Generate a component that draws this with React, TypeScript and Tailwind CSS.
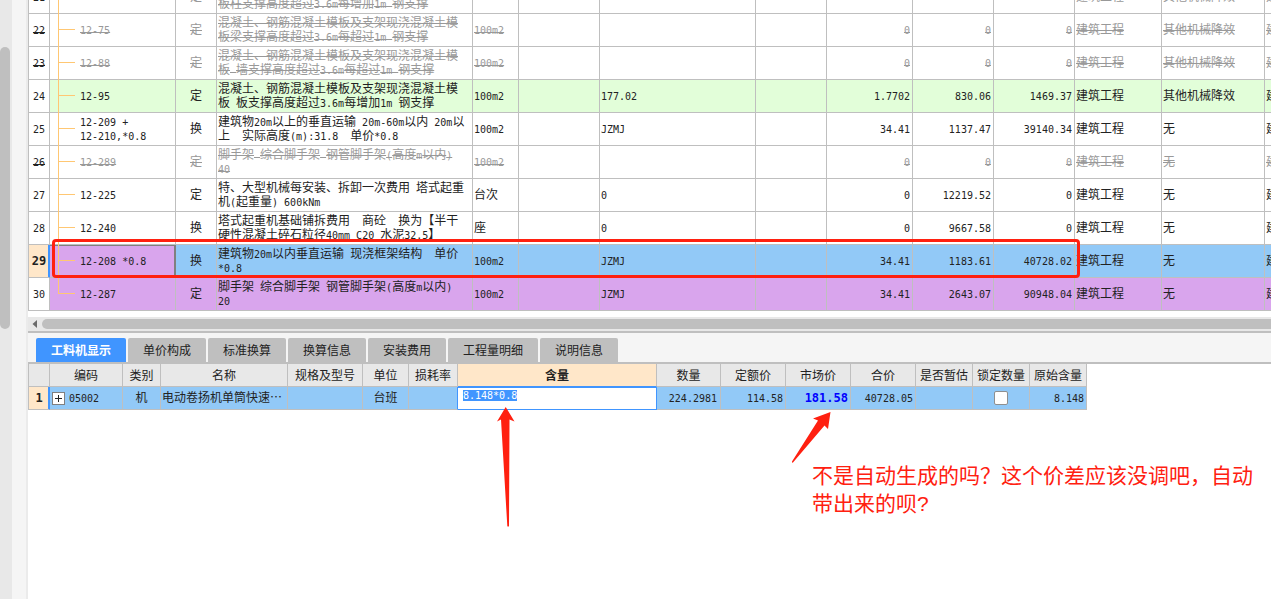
import React from 'react';
import clsx from 'clsx';

type RowState = 'normal' | 'deleted' | 'green' | 'selected' | 'purple';

interface QuotaRow {
  no: number;
  code: string;
  kind: string;
  name: string;
  unit: string;
  expr: string;
  qty: string;
  price: string;
  total: string;
  category: string;
  machine: string;
  state: RowState;
}

const rows: QuotaRow[] = [
  { no: 21, code: '', kind: '定', name: '\n板柱支撑高度超过3.6m每增加1m 钢支撑', unit: '', expr: '', qty: '', price: '', total: '', category: '建筑工程', machine: '其他机械降效', state: 'deleted' },
  { no: 22, code: '12-75', kind: '定', name: '混凝土、钢筋混凝土模板及支架现浇混凝土模\n板梁支撑高度超过3.6m每超过1m 钢支撑', unit: '100m2', expr: '', qty: '0', price: '0', total: '0', category: '建筑工程', machine: '其他机械降效', state: 'deleted' },
  { no: 23, code: '12-88', kind: '定', name: '混凝土、钢筋混凝土模板及支架现浇混凝土模\n板 墙支撑高度超过3.6m每超过1m 钢支撑', unit: '100m2', expr: '', qty: '0', price: '0', total: '0', category: '建筑工程', machine: '其他机械降效', state: 'deleted' },
  { no: 24, code: '12-95', kind: '定', name: '混凝土、钢筋混凝土模板及支架现浇混凝土模\n板 板支撑高度超过3.6m每增加1m 钢支撑', unit: '100m2', expr: '177.02', qty: '1.7702', price: '830.06', total: '1469.37', category: '建筑工程', machine: '其他机械降效', state: 'green' },
  { no: 25, code: '12-209 +\n12-210,*0.8', kind: '换', name: '建筑物20m以上的垂直运输 20m-60m以内 20m以\n上  实际高度(m):31.8  单价*0.8', unit: '100m2', expr: 'JZMJ', qty: '34.41', price: '1137.47', total: '39140.34', category: '建筑工程', machine: '无', state: 'normal' },
  { no: 26, code: '12-289', kind: '定', name: '脚手架 综合脚手架 钢管脚手架(高度m以内)\n40', unit: '100m2', expr: '', qty: '0', price: '0', total: '0', category: '建筑工程', machine: '无', state: 'deleted' },
  { no: 27, code: '12-225', kind: '定', name: '特、大型机械每安装、拆卸一次费用 塔式起重\n机(起重量) 600kNm', unit: '台次', expr: '0', qty: '0', price: '12219.52', total: '0', category: '建筑工程', machine: '无', state: 'normal' },
  { no: 28, code: '12-240', kind: '换', name: '塔式起重机基础铺拆费用  商砼  换为【半干\n硬性混凝土碎石粒径40mm C20 水泥32.5】', unit: '座', expr: '0', qty: '0', price: '9667.58', total: '0', category: '建筑工程', machine: '无', state: 'normal' },
  { no: 29, code: '12-208 *0.8', kind: '换', name: '建筑物20m以内垂直运输 现浇框架结构  单价\n*0.8', unit: '100m2', expr: 'JZMJ', qty: '34.41', price: '1183.61', total: '40728.02', category: '建筑工程', machine: '无', state: 'selected' },
  { no: 30, code: '12-287', kind: '定', name: '脚手架 综合脚手架 钢管脚手架(高度m以内)\n20', unit: '100m2', expr: 'JZMJ', qty: '34.41', price: '2643.07', total: '90948.04', category: '建筑工程', machine: '无', state: 'purple' },
];

const rowBg: Record<RowState, string> = {
  normal: 'bg-white text-[#222]',
  deleted: 'bg-white text-[#999] line-through',
  green: 'bg-[#e2fed9] text-[#222]',
  selected: 'bg-[#92c9f7] text-[#222]',
  purple: 'bg-[#d9a5ed] text-[#222]',
};

const tabs = ['工料机显示', '单价构成', '标准换算', '换算信息', '安装费用', '工程量明细', '说明信息'];

const mainCols = [21, 126, 41, 256, 46, 81, 156, 71, 86, 81, 81, 87, 103, 87];
const detailCols = [21, 73, 38, 127, 75, 46, 49, 199, 64, 65, 65, 65, 57, 57, 57];
const detailHeads = ['', '编码', '类别', '名称', '规格及型号', '单位', '损耗率', '含量', '数量', '定额价', '市场价', '合价', '是否暂估', '锁定数量', '原始含量'];

const cell = 'border-r border-b border-[#bfbfbf] p-0';

// Latin runs use a half-width monospace, so two of them take one Chinese character
const Mixed: React.FC<{ text: string; bold?: boolean }> = ({ text, bold }) => (
  <>
    {text.split(/([\x20-\x7e]+)/).map((part, i) =>
      /^[\x20-\x7e]+$/.test(part) ? (
        <span
          key={i}
          className={clsx("font-['DejaVu_Sans_Mono',monospace] leading-none", bold ? 'text-[12px] font-bold' : 'text-[10px]')}
        >
          {part}
        </span>
      ) : (
        part
      )
    )}
  </>
);

const ColGroup: React.FC<{ widths: number[] }> = ({ widths }) => (
  <colgroup>
    {widths.map((w, i) => (
      <col key={i} style={{ width: w }} />
    ))}
  </colgroup>
);

const QuotaTable: React.FC = () => (
  <table className="w-0 table-fixed border-separate border-spacing-0 border-l border-[#bfbfbf] shrink-0">
    <ColGroup widths={mainCols} />
    <tbody>
      {rows.map((row) => {
        const selected = row.state === 'selected';
        return (
          <tr key={row.no} className={clsx('h-[33px]', rowBg[row.state])}>
            <td
              className={clsx(
                cell,
                'text-center text-[#222]',
                row.state === 'deleted' && 'line-through',
                selected ? 'bg-[#ffe7c9] shadow-[inset_-1px_0_#4095ff] border-r-[#4095ff]' : 'bg-white'
              )}
            >
              <Mixed text={String(row.no)} bold={selected} />
            </td>
            <td className={clsx(cell, selected && 'bg-[#d9a5ed] shadow-[inset_-1px_0_#808080,inset_0_1px_#808080] border-r-[#808080]')}>
              <div className="flex items-center h-8 pl-2">
                <svg width="17" height="32" className="shrink-0 overflow-visible" fill="none" stroke="#ffc773" shapeRendering="crispEdges">
                  {row.no === 21 && <path d="M.5 0V33" />}
                  {row.no === 30 && <path d="M.5 0V15.5H17" />}
                  {row.no > 21 && row.no < 30 && <path d="M.5 0V33M.5 15.5H17" />}
                </svg>
                <span className="pl-[5px] whitespace-pre">
                  <Mixed text={row.code} />
                </span>
              </div>
            </td>
            <td className={clsx(cell, 'text-center')}>{row.kind}</td>
            <td className={clsx(cell, 'pl-px whitespace-pre overflow-hidden')}>
              {row.name.split('\n').map((line) => (
                <div key={line} className="h-3.5"><Mixed text={line} /></div>
              ))}
            </td>
            <td className={clsx(cell, 'pl-px')}><Mixed text={row.unit} /></td>
            <td className={cell} />
            <td className={clsx(cell, 'pl-px')}><Mixed text={row.expr} /></td>
            <td className={cell} />
            <td className={clsx(cell, 'pr-0.5 text-right')}><Mixed text={row.qty} /></td>
            <td className={clsx(cell, 'pr-0.5 text-right')}><Mixed text={row.price} /></td>
            <td className={clsx(cell, 'pr-0.5 text-right')}><Mixed text={row.total} /></td>
            <td className={clsx(cell, 'pl-px')}>{row.category}</td>
            <td className={clsx(cell, 'pl-px')}>{row.machine}</td>
            <td className={clsx(cell, 'pl-px')}>{row.category}</td>
          </tr>
        );
      })}
    </tbody>
  </table>
);

const DetailTable: React.FC = () => (
  <table className="w-0 table-fixed border-separate border-spacing-0 border-l border-[#bfbfbf] text-[#222]">
    <ColGroup widths={detailCols} />
    <thead>
      <tr className="h-[23px]">
        {detailHeads.map((head, i) => (
          <th
            key={i}
            className={clsx(
              cell,
              'pt-0.5 whitespace-nowrap',
              head === '含量' ? 'bg-[#ffe7c9] font-bold border-b-[#4095ff]' : 'bg-[#e8e8e8] font-normal'
            )}
          >
            {head}
          </th>
        ))}
      </tr>
    </thead>
    <tbody>
      <tr className="h-[23px] bg-[#92c9f7]">
        <td className={clsx(cell, 'bg-[#ffe7c9] text-center shadow-[inset_-1px_0_#4095ff] border-r-[#4095ff]')}>
          <Mixed text="1" bold />
        </td>
        <td className={cell}>
          <div className="flex items-center gap-1 pl-[2px]">
            <button aria-label="展开" className="flex items-center justify-center size-[13px] shrink-0 bg-white border border-[#808080]">
              <svg width="7" height="7" stroke="#222"><path d="M0 3.5H7M3.5 0V7" /></svg>
            </button>
            <span><Mixed text="05002" /></span>
          </div>
        </td>
        <td className={clsx(cell, 'text-center')}>机</td>
        <td className={clsx(cell, 'pl-px whitespace-nowrap overflow-hidden')}>电动卷扬机单筒快速⋯</td>
        <td className={cell} />
        <td className={clsx(cell, 'text-center')}>台班</td>
        <td className={clsx(cell, 'border-r-[#4095ff]')} />
        <td className="p-0 bg-white border-r border-b border-[#4095ff] align-top">
          <input
            aria-label="含量"
            autoFocus
            defaultValue="8.148*0.8"
            onFocus={(e) => e.target.select()}
            className="block w-full h-[15px] pl-[5px] border-t border-[#4095ff] outline-none font-['DejaVu_Sans_Mono',monospace] text-[10px] leading-[14px] selection:bg-[#4095ff] selection:text-white"
          />
        </td>
        <td className={clsx(cell, 'pr-[3px] text-right')}><Mixed text="224.2981" /></td>
        <td className={clsx(cell, 'pr-0.5 text-right')}><Mixed text="114.58" /></td>
        <td className={clsx(cell, 'pr-0.5 text-right text-[#0000ff]')}><Mixed text="181.58" bold /></td>
        <td className={clsx(cell, 'pr-0.5 text-right')}><Mixed text="40728.05" /></td>
        <td className={cell} />
        <td className={cell}>
          <input type="checkbox" aria-label="锁定数量" className="block mx-auto size-3.5 appearance-none bg-white border border-[#8f8f8f] rounded-xs" />
        </td>
        <td className={clsx(cell, 'pr-0.5 text-right')}><Mixed text="8.148" /></td>
      </tr>
    </tbody>
  </table>
);

const App: React.FC = () => (
  <div className="relative flex min-h-screen overflow-hidden bg-white font-['Liberation_Sans','Noto_Sans_CJK_SC',sans-serif] text-[12px] leading-[14px]">
    {/* Outer scrollbar */}
    <div className="w-3 shrink-0 bg-[#e8e8e8] pt-[47px]">
      <div className="w-2.5 h-[282px] rounded-full bg-[#bfbfbf]" />
    </div>
    <div className="w-4 shrink-0 bg-[#f5f5f5] border-r-2 border-[#ebebeb]" />

    <main className="flex-1 min-w-0">
      {/* Quota list, scrolled to its end */}
      <section className="flex items-end h-[311px] overflow-hidden">
        <QuotaTable />
      </section>
      <div className="flex items-center mt-1.5 h-3.5 bg-[#e8e8e8]">
        <svg width="14" height="14" fill="#6b6b6b"><path d="M9 3v8L4.500 7z" /></svg>
        <div className="flex-1 h-2.5 rounded-l-full bg-[#bfbfbf]" />
      </div>

      {/* Detail tabs */}
      <nav className="flex items-end gap-0.5 h-[33px] pl-2 bg-[#f5f5f5] border-t-2 border-b-2 border-[#bfbfbf]" role="tablist">
        {tabs.map((tab, i) => (
          <button
            key={tab}
            role="tab"
            aria-selected={i === 0}
            className={clsx(
              'h-6 pt-0.5 px-[15px] rounded-t-xs whitespace-nowrap',
              i === 0 ? 'bg-[#4095ff] text-white font-bold' : 'bg-[#bfbfbf] text-[#222]'
            )}
          >
            {tab}
          </button>
        ))}
      </nav>
      <DetailTable />
    </main>

    {/* Markup */}
    <div className="absolute left-[52px] top-[239px] w-[1028px] h-[39px] border-3 border-[#ff2010] rounded-sm pointer-events-none" />
    <svg className="absolute left-[490px] top-[400px] pointer-events-none" width="360" height="130" fill="#ff2010">
      <path d="M15.700 7L24.500 21.500L19.500 19.500L19 126Q18 127.500 17.300 126L11 19.500L7 21.500Q11 15 15.700 7Z" />
      <path d="M340.500 12L338 29L334.500 25.500L303 62.500Q301.500 63 302 61.500L328 20.500L323 18.500Z" />
    </svg>
    <p className="absolute left-[812px] top-[462px] w-[443px] text-[21px] leading-7 text-[#ff2010]">
      不是自动生成的吗？这个价差应该没调吧，自动带出来的呗?
    </p>
  </div>
);

export default App;
